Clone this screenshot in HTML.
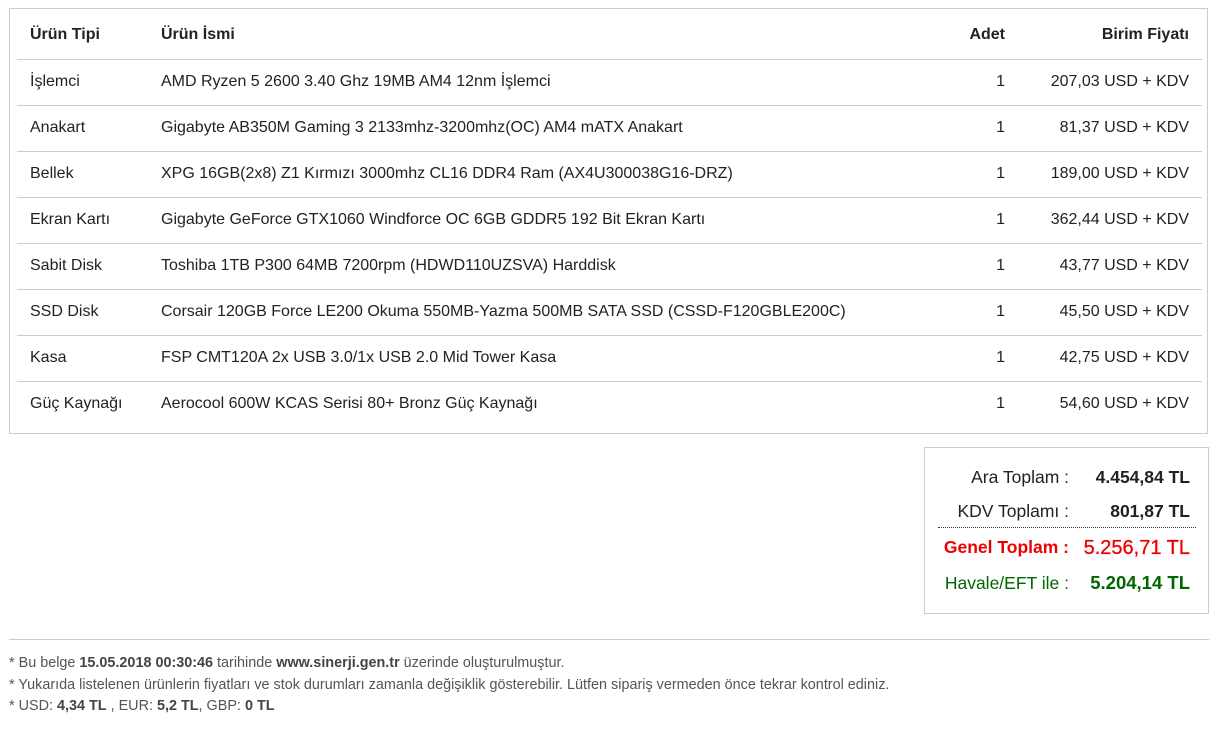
<!DOCTYPE html>
<html><head><meta charset="utf-8"><style>
body{margin:0;background:#fff;font-family:"Liberation Sans",Arial,sans-serif;color:#222;width:1215px;height:737px;position:relative;overflow:hidden}
.box{position:absolute;left:9px;top:8px;width:1197px;height:424px;border:1px solid #ccc}
table{position:absolute;left:7px;top:0;width:1185px;border-collapse:collapse;font-size:16px}
td,th{height:45px;border-bottom:1px solid #ccc;padding:0 13px;text-align:left;white-space:nowrap;box-sizing:border-box}
td{height:46px}
th{height:50px;padding-top:2px;font-weight:bold}
tr:last-child td{border-bottom:none}
.r{text-align:right}
td.a,th.a{padding-right:11px}
.tot{position:absolute;left:924px;top:447px;width:283px;height:165px;border:1px solid #ccc;font-size:17.5px}
.row{position:absolute;left:0;width:283px;height:20px}
.l{position:absolute;right:139px;text-align:right;white-space:nowrap}
.v{position:absolute;right:18px;font-weight:bold;white-space:nowrap}
.hr{position:absolute;left:9px;top:639px;width:1200px;border-top:1px solid #ccc}
.ft{position:absolute;left:9px;font-size:14.4px;color:#555;white-space:nowrap}
.ft b{color:#444}
</style></head><body>
<div class="box"><table>
<tr><th style="width:131px">Ürün Tipi</th><th>Ürün İsmi</th><th class="r a" style="width:80px">Adet</th><th class="r" style="width:186px">Birim Fiyatı</th></tr>
<tr><td>İşlemci</td><td>AMD Ryzen 5 2600 3.40 Ghz 19MB AM4 12nm İşlemci</td><td class="r a">1</td><td class="r">207,03 USD + KDV</td></tr>
<tr><td>Anakart</td><td>Gigabyte AB350M Gaming 3 2133mhz-3200mhz(OC) AM4 mATX Anakart</td><td class="r a">1</td><td class="r">81,37 USD + KDV</td></tr>
<tr><td>Bellek</td><td>XPG 16GB(2x8) Z1 Kırmızı 3000mhz CL16 DDR4 Ram (AX4U300038G16-DRZ)</td><td class="r a">1</td><td class="r">189,00 USD + KDV</td></tr>
<tr><td>Ekran Kartı</td><td>Gigabyte GeForce GTX1060 Windforce OC 6GB GDDR5 192 Bit Ekran Kartı</td><td class="r a">1</td><td class="r">362,44 USD + KDV</td></tr>
<tr><td>Sabit Disk</td><td>Toshiba 1TB P300 64MB 7200rpm (HDWD110UZSVA) Harddisk</td><td class="r a">1</td><td class="r">43,77 USD + KDV</td></tr>
<tr><td>SSD Disk</td><td>Corsair 120GB Force LE200 Okuma 550MB-Yazma 500MB SATA SSD (CSSD-F120GBLE200C)</td><td class="r a">1</td><td class="r">45,50 USD + KDV</td></tr>
<tr><td>Kasa</td><td>FSP CMT120A 2x USB 3.0/1x USB 2.0 Mid Tower Kasa</td><td class="r a">1</td><td class="r">42,75 USD + KDV</td></tr>
<tr><td>Güç Kaynağı</td><td>Aerocool 600W KCAS Serisi 80+ Bronz Güç Kaynağı</td><td class="r a">1</td><td class="r">54,60 USD + KDV</td></tr>
</table></div>
<div class="tot">
<div class="row" style="top:19px"><span class="l">Ara Toplam :</span><span class="v">4.454,84 TL</span></div>
<div class="row" style="top:53px"><span class="l">KDV Toplamı :</span><span class="v">801,87 TL</span></div>
<div style="position:absolute;left:13px;top:79px;width:258px;border-top:1px dotted #333"></div>
<div class="row" style="top:89px;color:#e00"><span class="l" style="font-weight:bold">Genel Toplam :</span><span class="v" style="font-size:20px;font-weight:normal;top:0;-webkit-text-stroke:0.3px #e00">5.256,71 TL</span></div>
<div class="row" style="top:125px;color:#060"><span class="l">Havale/EFT ile :</span><span class="v" style="font-size:18.5px;top:-1px">5.204,14 TL</span></div>
</div>
<div class="hr"></div>
<div class="ft" style="top:655px">* Bu belge <b>15.05.2018 00:30:46</b> tarihinde <b>www.sinerji.gen.tr</b> üzerinde oluşturulmuştur.</div>
<div class="ft" style="top:677px">* Yukarıda listelenen ürünlerin fiyatları ve stok durumları zamanla değişiklik gösterebilir. Lütfen sipariş vermeden önce tekrar kontrol ediniz.</div>
<div class="ft" style="top:698px">* USD: <b>4,34 TL</b> , EUR: <b>5,2 TL</b>, GBP: <b>0 TL</b></div>
</body></html>
